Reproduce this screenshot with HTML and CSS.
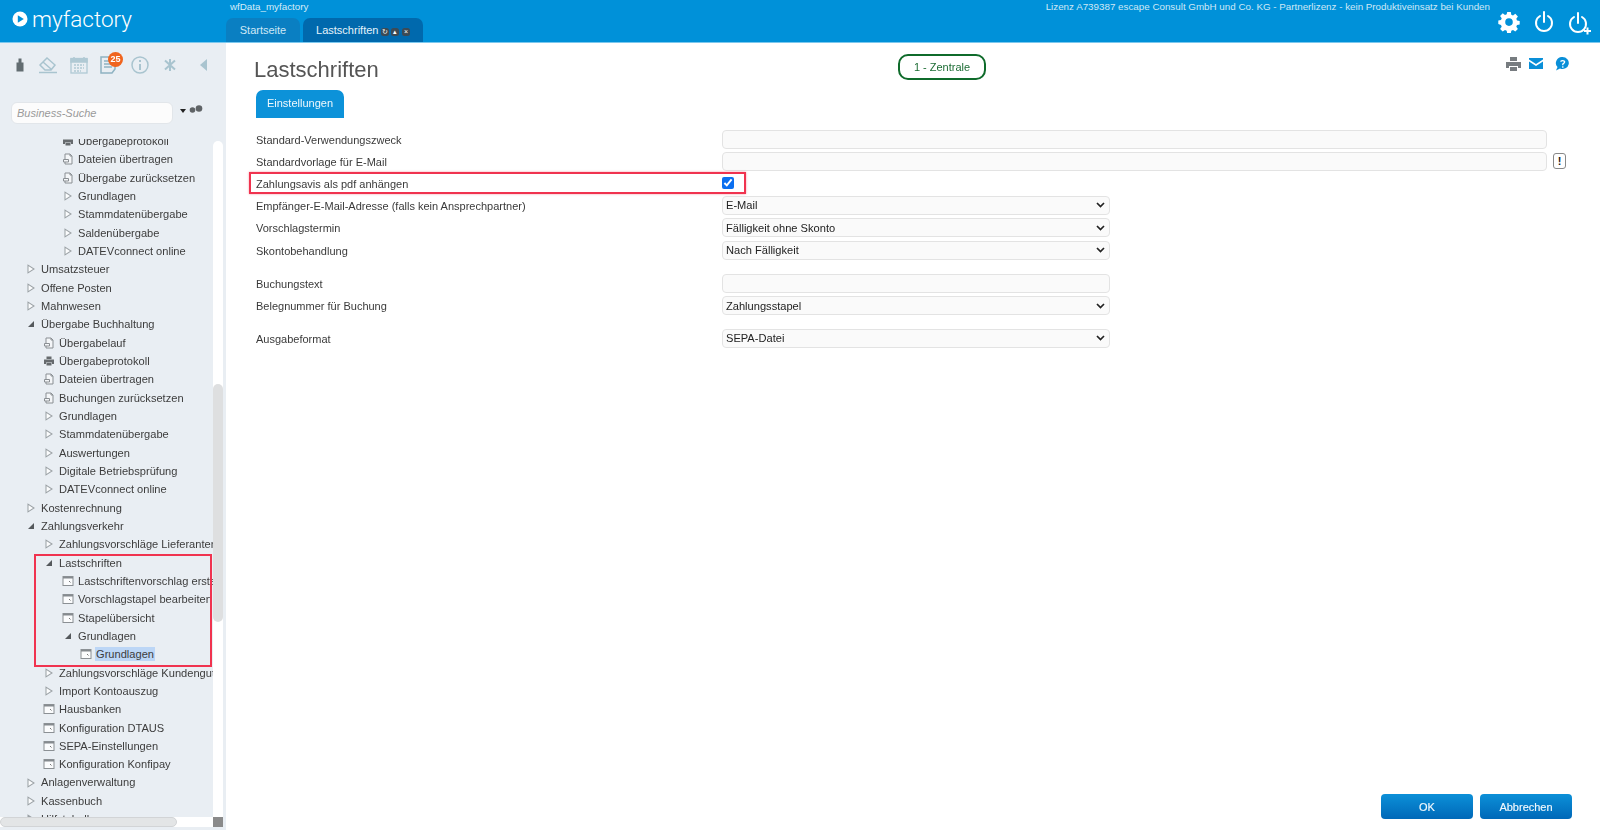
FILE: index.html
```html
<!DOCTYPE html>
<html lang="de">
<head>
  <meta charset="UTF-8" />
  <title>myfactory - Lastschriften</title>
  <link rel="stylesheet" href="styles.css">
</head>
<body>
  <svg class="defs" width="0" height="0">
    <symbol id="closed" viewBox="0 0 12 14"><path d="M2.500 2.500 9.500 7l-7 4.500z" fill="#fbfcfd" stroke="#9ba1a5" stroke-width="1.200"/></symbol>
    <symbol id="open" viewBox="0 0 12 14"><path d="M9.500 3.500v7h-7z" fill="#55595c"/></symbol>
    <symbol id="doc" viewBox="0 0 12 12"><path d="M3 6V1h5l2 2v8H3V8.500" fill="#f4f6f8" stroke="#8a8f93"/><path d="M8 1v2h2" fill="none" stroke="#8a8f93"/><path d="M1.500 6.500h5v2.500h-5z" fill="#f4f6f8" stroke="#8a8f93"/></symbol>
    <symbol id="print" viewBox="0 0 12 12"><path d="M3.500 1.500h5v2.500h-5zM1 4.500h10v4.500H9V7.500H3V9H1zM3.500 8h5v2.500h-5z" fill="#666a6d"/></symbol>
    <symbol id="form" viewBox="0 0 12 12"><rect x="1" y="1.500" width="10" height="9" fill="#fbfcfd" stroke="#8b9094"/><path d="M1 2h10v1.500H1z" fill="#858a8e"/><path d="M7 6l1.500 1.500" stroke="#777"/></symbol>
  </svg>

  <header class="topbar">
    <div class="logo">
      <svg width="16" height="16" viewBox="0 0 16 16"><circle cx="8" cy="8" r="7.500" fill="#fff"/><path d="M5.800 4.300 11.800 8l-6 3.700z" fill="#0091d9"/></svg>
      <span>myfactory</span>
    </div>
    <div class="head-mid">
      <div class="db-name">wfData_myfactory</div>
      <nav class="tabs">
        <a href="#" class="tab">Startseite</a>
        <a href="#" class="tab active">Lastschriften<span class="tab-btn">&#8635;</span><span class="tab-btn">&#9652;</span><span class="tab-btn">&#215;</span></a>
      </nav>
    </div>
    <div class="head-right">
      <div class="license">Lizenz A739387 escape Consult GmbH und Co. KG - Partnerlizenz - kein Produktiveinsatz bei Kunden</div>
      <div class="head-icons">
        <svg width="22" height="22" viewBox="0 0 22 22"><path fill="#fff" fill-rule="evenodd" d="M9.200 1h3.600l.5 2.700 1.700.7 2.300-1.600 2.600 2.600-1.600 2.300.7 1.700 2.700.5v3.600l-2.700.5-.7 1.700 1.600 2.300-2.600 2.600-2.300-1.600-1.700.7-.5 2.700H9.200l-.5-2.700-1.700-.7-2.300 1.600-2.600-2.600 1.600-2.300-.7-1.700L.3 13v-3.600l2.700-.5.7-1.700-1.600-2.300 2.600-2.600L7 3.900l1.700-.7zM11 7.300a3.800 3.800 0 1 0 0 7.600 3.800 3.800 0 0 0 0-7.600z"/></svg>
        <svg width="20" height="22" viewBox="0 0 20 22"><path d="M6 5a8 8 0 1 0 8 0M10 1v10" fill="none" stroke="#fff" stroke-width="2" stroke-linecap="round"/></svg>
        <svg class="power-plus" width="24" height="24" viewBox="0 0 24 24"><path d="M6 6a8 8 0 1 0 8 0M10 2v10" fill="none" stroke="#fff" stroke-width="2" stroke-linecap="round"/><path d="M16 20h7M19.500 16.500v7" stroke="#fff" stroke-width="2"/></svg>
      </div>
    </div>
  </header>

  <div class="app">
    <aside class="sidebar">
      <div class="side-tools">
        <svg class="tool-hand" width="12" height="16" viewBox="0 0 12 16"><path d="M4.500 1.500h3v4h2v9h-7v-9h2z" fill="#626c71"/></svg>
        <svg width="20" height="18" viewBox="0 0 20 18"><path d="M2 9l7-7 8 7-4 5H7zM5 6l8 7" fill="none" stroke="#a9c4cf" stroke-width="1.500"/><path d="M1 16.500h18" stroke="#a9c4cf" stroke-width="1.500"/></svg>
        <svg width="18" height="18" viewBox="0 0 18 18"><rect x="1" y="2.500" width="16" height="14.500" fill="none" stroke="#b0c9d4" stroke-width="1.300"/><path d="M1 3h16v3H1zM4 1v3M14 1v3" stroke="#b0c9d4" stroke-width="1.500" fill="#b0c9d4"/><path d="M4 9h10M4 12h10M4 15h7" stroke="#b0c9d4" stroke-width="1.500" stroke-dasharray="2 1"/></svg>
        <span class="note">
          <svg width="18" height="18" viewBox="0 0 18 18"><path d="M1 1h14v12l-3 4H1z" fill="none" stroke="#8fb3c2" stroke-width="1.500"/><path d="M4 5h8M4 8h8M4 11h8" stroke="#8fb3c2" stroke-width="1.300"/></svg>
          <b class="badge">25</b>
        </span>
        <svg class="tool-info" width="18" height="18" viewBox="0 0 18 18"><circle cx="9" cy="9" r="8" fill="none" stroke="#a9c4cf" stroke-width="1.500"/><path d="M9 8v6M9 4v2" stroke="#a9c4cf" stroke-width="2"/></svg>
        <svg class="tool-star" width="12" height="12" viewBox="0 0 12 12"><path d="M1 1.500l10 9M11 1.500l-10 9M6 0v12" stroke="#a9c4cf" stroke-width="2"/></svg>
        <svg class="tool-back" width="8" height="12" viewBox="0 0 8 12"><path d="M7 0v12L0 6z" fill="#a9c4cf"/></svg>
      </div>

      <div class="search-row">
        <input class="search" type="text" placeholder="Business-Suche" />
        <span class="search-caret"></span>
        <svg width="14" height="9" viewBox="0 0 14 9"><circle cx="3.500" cy="5" r="2.800" fill="#5f6366"/><circle cx="10" cy="3.500" r="3.300" fill="#5f6366"/></svg>
      </div>

      <div class="tree-area">
        <ul class="tree">
          <li class="lv3"><svg><use href="#print"/></svg>Übergabeprotokoll</li>
          <li class="lv3"><svg><use href="#doc"/></svg>Dateien übertragen</li>
          <li class="lv3"><svg><use href="#doc"/></svg>Übergabe zurücksetzen</li>
          <li class="lv3"><svg><use href="#closed"/></svg>Grundlagen</li>
          <li class="lv3"><svg><use href="#closed"/></svg>Stammdatenübergabe</li>
          <li class="lv3"><svg><use href="#closed"/></svg>Saldenübergabe</li>
          <li class="lv3"><svg><use href="#closed"/></svg>DATEVconnect online</li>
          <li class="lv1"><svg><use href="#closed"/></svg>Umsatzsteuer</li>
          <li class="lv1"><svg><use href="#closed"/></svg>Offene Posten</li>
          <li class="lv1"><svg><use href="#closed"/></svg>Mahnwesen</li>
          <li class="lv1"><svg><use href="#open"/></svg>Übergabe Buchhaltung</li>
          <li class="lv2"><svg><use href="#doc"/></svg>Übergabelauf</li>
          <li class="lv2"><svg><use href="#print"/></svg>Übergabeprotokoll</li>
          <li class="lv2"><svg><use href="#doc"/></svg>Dateien übertragen</li>
          <li class="lv2"><svg><use href="#doc"/></svg>Buchungen zurücksetzen</li>
          <li class="lv2"><svg><use href="#closed"/></svg>Grundlagen</li>
          <li class="lv2"><svg><use href="#closed"/></svg>Stammdatenübergabe</li>
          <li class="lv2"><svg><use href="#closed"/></svg>Auswertungen</li>
          <li class="lv2"><svg><use href="#closed"/></svg>Digitale Betriebsprüfung</li>
          <li class="lv2"><svg><use href="#closed"/></svg>DATEVconnect online</li>
          <li class="lv1"><svg><use href="#closed"/></svg>Kostenrechnung</li>
          <li class="lv1"><svg><use href="#open"/></svg>Zahlungsverkehr</li>
          <li class="lv2"><svg><use href="#closed"/></svg>Zahlungsvorschläge Lieferanten</li>
          <li class="lv2"><svg><use href="#open"/></svg>Lastschriften</li>
          <li class="lv3"><svg><use href="#form"/></svg>Lastschriftenvorschlag erstellen</li>
          <li class="lv3"><svg><use href="#form"/></svg>Vorschlagstapel bearbeiten</li>
          <li class="lv3"><svg><use href="#form"/></svg>Stapelübersicht</li>
          <li class="lv3"><svg><use href="#open"/></svg>Grundlagen</li>
          <li class="lv4"><svg><use href="#form"/></svg><span class="selected">Grundlagen</span></li>
          <li class="lv2"><svg><use href="#closed"/></svg>Zahlungsvorschläge Kundengutschriften</li>
          <li class="lv2"><svg><use href="#closed"/></svg>Import Kontoauszug</li>
          <li class="lv2"><svg><use href="#form"/></svg>Hausbanken</li>
          <li class="lv2"><svg><use href="#form"/></svg>Konfiguration DTAUS</li>
          <li class="lv2"><svg><use href="#form"/></svg>SEPA-Einstellungen</li>
          <li class="lv2"><svg><use href="#form"/></svg>Konfiguration Konfipay</li>
          <li class="lv1"><svg><use href="#closed"/></svg>Anlagenverwaltung</li>
          <li class="lv1"><svg><use href="#closed"/></svg>Kassenbuch</li>
          <li class="lv1"><svg><use href="#closed"/></svg>Hilfstabellen</li>
        </ul>
        <div class="tree-mark"></div>
        <div class="vscroll"><div class="vthumb"></div></div>
      </div>
      <div class="hscroll"><div class="hthumb"></div><div class="hcorner"></div></div>
    </aside>

    <main class="main">
      <div class="page-head">
        <h1>Lastschriften</h1>
        <div class="pill">1 - Zentrale</div>
        <div class="page-tools">
          <svg width="15" height="14" viewBox="0 0 15 14"><path d="M4 0h7v4H4zM0 5h15v6h-3V9H3v2H0zM4 10h7v4H4z" fill="#777c80"/></svg>
          <svg width="14" height="11" viewBox="0 0 14 11"><path d="M0 0h14v1.500L7 6 0 1.500zM0 3.500 7 8l7-4.500V11H0z" fill="#0a8fd8"/></svg>
          <svg width="14" height="14" viewBox="0 0 14 14"><path d="M7.500 0a6.300 6 0 1 1-2.500 11.500L1 13.500l1.500-3.500A6.300 6 0 0 1 7.500 0z" fill="#0a8fd8"/><path d="M5.500 4.500Q7.500 2.800 9.500 4.300 10 6 7.800 7v1.200M7.800 9.300v1.500" fill="none" stroke="#fff" stroke-width="1.300"/></svg>
        </div>
      </div>

      <div class="sub-tabs"><a href="#" class="sub-tab">Einstellungen</a></div>

      <form class="form">
        <div class="row"><label>Standard-Verwendungszweck</label><input class="field wide" type="text" /></div>
        <div class="row"><label>Standardvorlage für E-Mail</label><input class="field wide" type="text" /><button type="button" class="hint">!</button></div>
        <div class="row check-row">
          <label>Zahlungsavis als pdf anhängen</label><input class="check" type="checkbox" checked />
          <div class="row-mark"></div>
        </div>
        <div class="row"><label>Empfänger-E-Mail-Adresse (falls kein Ansprechpartner)</label><select class="field"><option>E-Mail</option></select></div>
        <div class="row tall"><label>Vorschlagstermin</label><select class="field"><option>Fälligkeit ohne Skonto</option></select></div>
        <div class="row"><label>Skontobehandlung</label><select class="field"><option>Nach Fälligkeit</option></select></div>
        <div class="row gap-top"><label>Buchungstext</label><input class="field" type="text" /></div>
        <div class="row tall"><label>Belegnummer für Buchung</label><select class="field"><option>Zahlungsstapel</option></select></div>
        <div class="row gap-top"><label>Ausgabeformat</label><select class="field"><option>SEPA-Datei</option></select></div>
      </form>

      <div class="actions">
        <button class="btn" type="button">OK</button>
        <button class="btn" type="button">Abbrechen</button>
      </div>
    </main>
  </div>
</body>
</html>
```

FILE: styles.css
```css
* { box-sizing: border-box; }
html, body { height: 100%; }
body {
  margin: 0;
  font-family: 'Liberation Sans', Arial, sans-serif;
  font-size: 11px;
  color: #3a3a3a;
  background: #fff;
  overflow: hidden;
  display: flex;
  flex-direction: column;
  filter: blur(0.45px);
}
.defs { position: absolute; }

/* Top bar */
.topbar {
  height: 43px;
  background: #0091d9;
  border-bottom: 1px solid #7cc8ee;
  display: flex;
  flex: none;
  color: #fff;
}
.logo {
  width: 226px;
  padding: 0 0 4px 12px;
  display: flex;
  align-items: center;
  gap: 4px;
  font-family: Roboto, sans-serif;
  font-weight: 300;
  font-size: 22.500px;
}
.head-mid { display: flex; flex-direction: column; }
.db-name { font-size: 9.800px; line-height: 14px; padding-left: 4px; color: #d5ecf8; }
.tabs { display: flex; gap: 3px; margin-top: 4px; }
.tab {
  width: 74px;
  height: 24px;
  line-height: 24px;
  text-align: center;
  color: #cfe8f6;
  background: #0a7fc2;
  border-radius: 7px 7px 0 0;
  text-decoration: none;
  font-size: 11px;
  white-space: nowrap;
}
.tab.active { width: 120px; background: #0069ad; color: #e6f3fb; }
.tab-btn {
  display: inline-block;
  width: 8px;
  height: 8px;
  line-height: 8px;
  margin-left: 2.500px;
  border-radius: 2.500px;
  background: #3c4a55;
  color: #fff;
  font-size: 7px;
  text-align: center;
  vertical-align: 0;
}
.head-right { margin-left: auto; display: flex; flex-direction: column; align-items: flex-end; }
.license { font-size: 9.800px; line-height: 14px; padding-right: 110px; color: #cfe8f6; }
.head-icons { display: flex; align-items: center; gap: 14px; padding: 0 8px 0 0; margin-top: -5px; }
.power-plus { margin-top: 2px; }

/* Layout */
.app { flex: 1; display: flex; min-height: 0; }
.sidebar {
  width: 226px;
  flex: none;
  background: #e9eef3;
  display: flex;
  flex-direction: column;
}

/* Sidebar tools */
.side-tools {
  height: 43px;
  padding: 0 0 0 14px;
  flex: none;
  display: flex;
  align-items: center;
  gap: 12px;
}
.note { position: relative; display: flex; }
.badge {
  position: absolute;
  left: 8px;
  top: -4px;
  width: 15px;
  height: 15px;
  border-radius: 50%;
  background: #f0641e;
  color: #fff;
  font-size: 9px;
  line-height: 15px;
  text-align: center;
}
.tool-info { margin-left: 1px; }
.tool-star { margin-left: 3px; }
.tool-back { margin-left: 12px; }

.search-row {
  height: 53px;
  padding: 16px 0 0 11px;
  display: flex;
  align-items: flex-start;
  flex: none;
}
.search {
  width: 162px;
  height: 22px;
  padding: 0 5px;
  border: 1px solid #e2e6ea;
  border-radius: 6px;
  background: #fcfcfc;
  font: italic 11px 'Liberation Sans', Arial, sans-serif;
  outline: none;
}
.search::placeholder { color: #9a9a9a; }
.search-caret {
  margin: 7px 3px 0 7px;
  border: 3.500px solid transparent;
  border-top: 4px solid #222;
  border-bottom: 0;
}
.search-row svg { margin-top: 3px; }

/* Tree */
.tree-area { flex: 1; min-height: 0; position: relative; display: flex; overflow: hidden; }
.tree {
  list-style: none;
  width: 213px;
  flex: none;
  margin: -7px 0 0;
  padding: 0;
  overflow: hidden;
  font-size: 11.100px;
  color: #3c3c3c;
}
.tree li {
  height: 18.330px;
  line-height: 18.330px;
  white-space: nowrap;
  display: flex;
  align-items: center;
}
.tree svg { width: 12px; height: 12px; flex: none; margin-right: 4px; }
.lv1 { padding-left: 25px; }
.lv2 { padding-left: 43px; }
.lv3 { padding-left: 62px; }
.lv4 { padding-left: 80px; }
.selected { background: #bcd6f6; padding: 0 1px; margin-left: -1px; line-height: 14px; }
.tree-mark {
  position: absolute;
  left: 34px;
  top: 415px;
  width: 178px;
  height: 113px;
  border: 2px solid #f0334f;
  pointer-events: none;
}
.vscroll { width: 10px; background: #fff; border-radius: 5px 5px 0 0; margin-top: 2px; padding-top: 243px; }
.vthumb { height: 238px; background: #dedfe0; border-radius: 5px; }
.hscroll { height: 10px; flex: none; margin: 0 3px 3px 0; background: #fff; display: flex; justify-content: space-between; }
.hthumb { width: 177px; background: #e3e5e6; border: 1px solid #d2d4d6; border-radius: 5px; }
.hcorner { width: 10px; background: #8a8a8a; }

/* Main */
.main {
  flex: 1;
  min-width: 0;
  padding: 0 28px 11px 28px;
  display: flex;
  flex-direction: column;
}
.page-head { height: 47px; display: flex; align-items: center; flex: none; }
.page-head h1 {
  width: 644px;
  margin: 6px 0 0;
  font-size: 22px;
  font-weight: normal;
  color: #555;
}
.pill {
  width: 88px;
  height: 26px;
  border: 2px solid #0f6b2b;
  border-radius: 10px;
  color: #1d6d35;
  line-height: 23px;
  text-align: center;
  font-size: 11px;
}
.page-tools { margin-left: auto; display: flex; align-items: center; gap: 8px; padding: 0 3px 0 0; margin-top: -6px; }
.page-tools svg:last-child { margin-left: 4px; }

.sub-tabs { padding-left: 2px; flex: none; }
.sub-tab {
  display: inline-block;
  width: 88px;
  height: 28px;
  line-height: 27px;
  text-align: center;
  background: #0c92d9;
  color: #eef8fd;
  border-radius: 7px 7px 0 0;
  text-decoration: none;
  font-size: 11px;
}

/* Form */
.form { margin-top: 10px; }
.row { height: 22px; display: flex; align-items: center; position: relative; }
.row label { width: 468px; padding: 1px 0 0 2px; flex: none; font-size: 11px; }
.row.tall { height: 23px; }
.row.gap-top { margin-top: 11px; }
.row.gap-top:last-child { margin-top: 10px; }
.field {
  width: 388px;
  height: 19px;
  padding: 0 3px;
  border: 1px solid #e3e3e3;
  border-radius: 4px;
  background: #fafafa;
  font: 11.100px 'Liberation Sans', Arial, sans-serif;
  color: #222;
  outline: none;
}
.field.wide { width: 825px; }
select.field {
  appearance: none;
  background: #fafafa url("data:image/svg+xml,%3Csvg xmlns='http://www.w3.org/2000/svg' width='9' height='6'%3E%3Cpath d='M1 1l3.500 3.500L8 1' fill='none' stroke='%23222' stroke-width='1.700'/%3E%3C/svg%3E") no-repeat right 4px center;
}
.hint {
  width: 13px;
  height: 16px;
  margin-left: 6px;
  padding: 0;
  border: 1px solid #888;
  border-radius: 3px;
  background: #fff;
  font: bold 11px 'Liberation Sans', Arial, sans-serif;
  color: #222;
}
.check { width: 12px; height: 12px; margin: 0; accent-color: #0b6ff0; }
.row-mark {
  position: absolute;
  left: -5px;
  top: 0;
  width: 497px;
  height: 22px;
  border: 2px solid #f0334f;
  box-shadow: 0 0 2px rgba(240, 51, 79, .5);
}

.actions { margin-top: auto; display: flex; justify-content: flex-end; gap: 7px; }
.btn {
  width: 92px;
  height: 25px;
  border: 0;
  border-radius: 4px;
  background: linear-gradient(#0c90d8, #0068b8);
  color: #f2f9fd;
  font: 11px 'Liberation Sans', Arial, sans-serif;
  -webkit-text-stroke: 0.15px #f2f9fd;
}
```
